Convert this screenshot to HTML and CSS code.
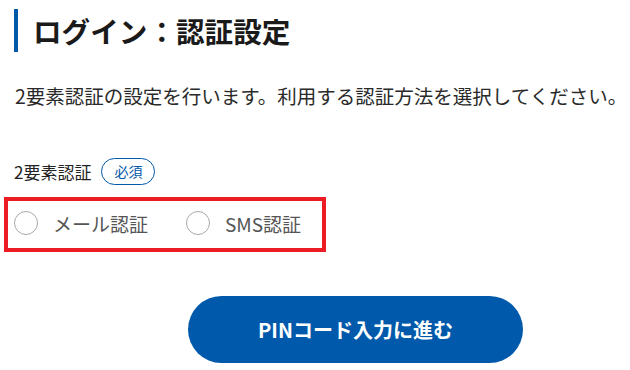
FILE: index.html
```html
<!DOCTYPE html>
<html lang="ja">
<head>
  <meta charset="UTF-8" />
  <meta name="viewport" content="width=device-width, initial-scale=1.0"/>
  <title>ログイン：認証設定</title>
  <link rel="stylesheet" href="styles.css">
</head>
<body>
<div class="page">
  <h1 class="page-title">ログイン：認証設定</h1>
  <p class="lead">2要素認証の設定を行います。利用する認証方法を選択してください。</p>

  <div class="field">
    <div class="field-label">
      <span>2要素認証</span>
      <span class="required">必須</span>
    </div>
    <div class="choices">
      <label class="choice">
        <input type="radio" name="auth" value="mail">
        <span class="radio-mark"></span>
        <span class="choice-text">メール認証</span>
      </label>
      <label class="choice">
        <input type="radio" name="auth" value="sms">
        <span class="radio-mark"></span>
        <span class="choice-text">SMS認証</span>
      </label>
    </div>
  </div>

  <button class="submit-btn" type="button">PINコード入力に進む</button>
</div>
</body>
</html>
```

FILE: styles.css
```css
body {
  margin: 0;
  background: #fff;
  color: #222;
  font-family: "Noto Sans CJK JP", "Noto Sans", sans-serif;
}
.page {
  padding: 9px 0 0 14px;
}
.page-title {
  margin: 0;
  border-left: 4px solid #0058a8;
  padding-left: 15px;
  height: 43px;
  line-height: 43px;
  font-size: 28.6px;
  font-weight: bold;
  color: #1a1a1a;
}
.lead {
  margin: 29px 0 0 1px;
  font-size: 19.5px;
  line-height: 30px;
  color: #2a2a2a;
  white-space: nowrap;
}
.field {
  margin-top: 47px;
}
.field-label {
  display: flex;
  align-items: center;
  gap: 10px;
  height: 27px;
  font-size: 17px;
  color: #222;
}
.required {
  box-sizing: border-box;
  width: 54px;
  height: 27px;
  border: 1px solid #0058a8;
  border-radius: 14px;
  color: #0058a8;
  font-size: 14px;
  line-height: 25px;
  text-align: center;
}
.choices {
  box-sizing: border-box;
  display: flex;
  align-items: center;
  width: 322px;
  height: 55px;
  margin: 12px 0 0 -10px;
  padding: 0 0 3px 6px;
  border: 4px solid #ec1c24;
}
.choice {
  display: flex;
  align-items: center;
  cursor: pointer;
}
.choice + .choice {
  margin-left: 38px;
}
.choice input {
  display: none;
}
.radio-mark {
  box-sizing: border-box;
  width: 24px;
  height: 24px;
  border: 1px solid #a8a8a8;
  border-radius: 50%;
  background: #fff;
}
.choice-text {
  margin-left: 15px;
  font-size: 19px;
  color: #555;
}
.submit-btn {
  display: block;
  width: 335px;
  height: 67px;
  margin: 44px 0 0 174px;
  border: none;
  border-radius: 34px;
  background: #0059aa;
  color: #fff;
  font-family: "Noto Sans CJK JP", "Noto Sans", sans-serif;
  font-size: 20px;
  font-weight: bold;
  cursor: pointer;
}
```
